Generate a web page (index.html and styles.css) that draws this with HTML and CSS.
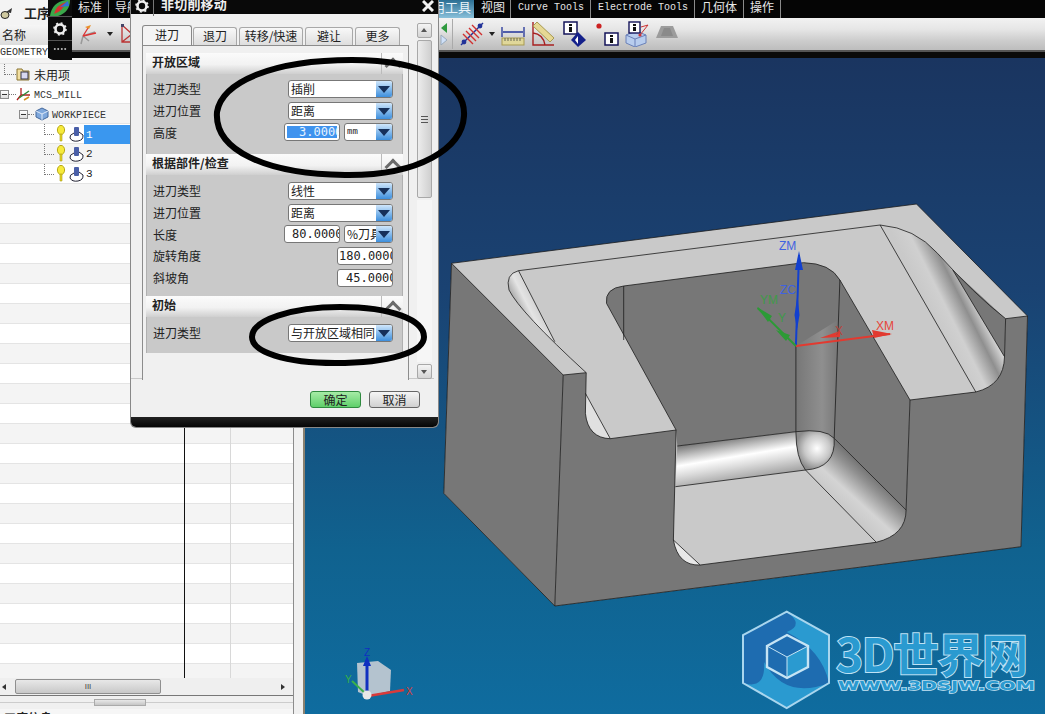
FILE: index.html
```html
<!DOCTYPE html>
<html lang="zh">
<head>
<meta charset="utf-8">
<title>非切削移动</title>
<link rel="stylesheet" href="styles.css">
</head>
<body>
<div class="app">
  <header class="top">
    <div class="left-head">
      <div class="nav-title">
        <svg class="nav-icon" viewBox="0 0 14 14" width="14" height="14"><ellipse cx="5" cy="9" rx="4" ry="3.5" fill="#cfc9a0" stroke="#222"/><path d="M6 6 L12 2 L11 7 Z" fill="#333"/></svg>
        <span>工序</span>
      </div>
      <div class="col-head">名称</div>
      <div class="geom">GEOMETRY</div>
    </div>
    <div class="ribbon">
      <nav class="tabs">
        <span class="tab first">标准</span>
        <span class="tab">导航</span>
        <span class="tab active">实用工具</span>
        <span class="tab">视图</span>
        <span class="tab mono">Curve Tools</span>
        <span class="tab mono">Electrode Tools</span>
        <span class="tab">几何体</span>
        <span class="tab">操作</span>
      </nav>
      <div class="tools">
        <div class="tool-left">
          <svg viewBox="0 0 24 24" width="24" height="24"><path d="M7 14 L5 22 M7 14 L13 19 M7 14 L19 10" stroke="#999" stroke-width="1.5" fill="none"/><path d="M7 14 L12 6 M7 14 L20 11" stroke="#d33" stroke-width="1.3" fill="none"/><path d="M9 5 L15 3 L13 7 Z" fill="#e8902a"/></svg>
          <span class="caret"></span>
          <svg viewBox="0 0 14 24" width="14" height="24"><path d="M2 3 L2 20 L12 20 M2 3 L12 12 L2 20" stroke="#b33" stroke-width="1.3" fill="none"/><rect x="1" y="2" width="3" height="3" fill="#446"/><rect x="10" y="10" width="3" height="3" fill="#b33"/></svg>
        </div>
        <div class="tool-right">
          <div class="nudge">
            <svg viewBox="0 0 8 24" width="8" height="24"><path d="M7 2 L1 7 L7 12 Z" fill="#2f9a3f"/><path d="M1 14 L7 19 L1 24 Z" fill="#cfe0f8" stroke="#9ab"/></svg>
          </div>
          <span class="tool-sep"></span>
          <svg viewBox="0 0 24 26" width="24" height="26"><path d="M1 24 L23 2" stroke="#223399" stroke-width="1.4"/><circle cx="20" cy="5" r="2.4" fill="#223399"/><circle cx="4" cy="21" r="2.4" fill="#223399"/><path d="M6 10 L16 20 M9 7 L19 17 M12 4 L22 14 M3 13 L13 23" stroke="#d03030" stroke-width="1.4"/></svg>
          <span class="caret"></span>
          <svg viewBox="0 0 26 26" width="26" height="26"><path d="M2 6 L2 16 M24 6 L24 16 M3 11 L23 11" stroke="#223399" stroke-width="1.3"/><rect x="2" y="17" width="22" height="7" fill="#e0d79a" stroke="#a89a50"/><path d="M5 17 v3 M8 17 v3 M11 17 v3 M14 17 v3 M17 17 v3 M20 17 v3" stroke="#665"/></svg>
          <svg viewBox="0 0 24 26" width="24" height="26"><path d="M2 1 L2 24 L23 24 M2 12 Q12 13 14 24" stroke="#a82020" stroke-width="1.4" fill="none"/><path d="M6 1 L2 5 L19 21 L23 17 Z" fill="#e6d894" stroke="#a89a50"/></svg>
          <svg class="far" viewBox="0 0 24 26" width="24" height="26"><rect x="1" y="1" width="13" height="12" fill="#fff" stroke="#14145a" stroke-width="1.5"/><rect x="6" y="3" width="3" height="2" fill="#111"/><rect x="6" y="6" width="3" height="5" fill="#111"/><path d="M15 11 L23 19 L15 26 L8 19 Z" fill="#14208a"/><path d="M15 15 L12 19 L15 23 Z" fill="#fff"/></svg>
          <svg class="far" viewBox="0 0 24 26" width="24" height="26"><circle cx="4" cy="5" r="2.6" fill="#cc2222"/><rect x="10" y="12" width="13" height="12" fill="#fff" stroke="#14145a" stroke-width="1.5"/><rect x="15" y="14" width="3" height="2" fill="#111"/><rect x="15" y="17" width="3" height="5" fill="#111"/></svg>
          <svg viewBox="0 0 26 26" width="26" height="26"><path d="M2 14 L12 10 L22 14 L22 22 L11 26 L2 22 Z" fill="#b8cdee" stroke="#6a80b8"/><path d="M2 14 L11 18 L22 14 M11 18 L11 26" stroke="#6a80b8" fill="none"/><rect x="5" y="1" width="11" height="11" fill="#fff" stroke="#14145a" stroke-width="1.4"/><rect x="9" y="3" width="3" height="2" fill="#111"/><rect x="9" y="6" width="3" height="4" fill="#111"/><path d="M16 14 L24 4 L17 6" stroke="#c33" fill="none"/><circle cx="16" cy="14" r="1.6" fill="#c33"/></svg>
          <svg viewBox="0 0 24 26" width="24" height="26"><path d="M6 5 L18 5 L23 17 L1 17 Z" fill="#9c9c9c"/><path d="M9 7 L15 7 L18 15 L6 15 Z" fill="#8a8a8a"/></svg>
        </div>
      </div>
      <div class="black-strip"></div>
    </div>
  </header>

  <main class="main">
    <section class="tree">
      <div class="list">
        <div class="row lv0">
          <span class="branch b-top"></span>
          <svg class="ico" viewBox="0 0 14 14" width="14" height="14"><path d="M1 2 H6 L7 4 H13 V13 H1 Z" fill="#f2dfa0" stroke="#8a7530"/><rect x="5" y="5" width="7" height="7" fill="#d8d8f0" stroke="#334"/></svg>
          <span class="cjk">未用项</span>
        </div>
        <div class="row lv0">
          <span class="exp"></span>
          <span class="branch b-plain"></span>
          <svg class="ico" viewBox="0 0 16 16" width="16" height="16"><path d="M5 2 V9 L14 9 M5 9 L1 14" stroke="#b02020" fill="none" stroke-width="1.3"/><path d="M3 12 L13 5" stroke="#2f8a3a" stroke-width="1.5"/><path d="M8 14 L13 11" stroke="#d09020" stroke-width="1.5"/></svg>
          <span class="mono-t">MCS_MILL</span>
        </div>
        <div class="row lv1">
          <span class="exp"></span>
          <span class="branch b-plain short"></span>
          <svg class="ico" viewBox="0 0 16 16" width="16" height="16"><path d="M2 5 L8 2 L14 5 L14 11 L8 14 L2 11 Z" fill="#7fa8dc" stroke="#44689c"/><path d="M2 5 L8 8 L14 5 M8 8 V14" stroke="#dfeaf8" fill="none"/></svg>
          <span class="mono-t">WORKPIECE</span>
        </div>
        <div class="row lv2 sel-row">
          <span class="branch b-op"></span>
          <svg class="bulb" viewBox="0 0 10 18" width="10" height="18"><ellipse cx="5" cy="5" rx="3.6" ry="4.6" fill="#f6ea3c" stroke="#b8a818"/><path d="M4 9 L4 16 L6 16 L6 9 Z" fill="#e8d820" stroke="#a89a18" stroke-width=".6"/></svg>
          <svg class="tool" viewBox="0 0 15 17" width="15" height="17"><path d="M5 7 Q0 9 1 12 Q3 16 9 15 Q14.5 14 14 9 L10 6" fill="#fff" stroke="#223"/><rect x="5" y="1" width="5" height="9" rx="1" fill="#4a5fa8"/></svg>
          <span class="op-label selected">1</span>
        </div>
        <div class="row lv2">
          <span class="branch b-op"></span>
          <svg class="bulb" viewBox="0 0 10 18" width="10" height="18"><ellipse cx="5" cy="5" rx="3.6" ry="4.6" fill="#f6ea3c" stroke="#b8a818"/><path d="M4 9 L4 16 L6 16 L6 9 Z" fill="#e8d820" stroke="#a89a18" stroke-width=".6"/></svg>
          <svg class="tool" viewBox="0 0 15 17" width="15" height="17"><path d="M5 7 Q0 9 1 12 Q3 16 9 15 Q14.5 14 14 9 L10 6" fill="#fff" stroke="#223"/><rect x="5" y="1" width="5" height="9" rx="1" fill="#4a5fa8"/></svg>
          <span class="op-label">2</span>
        </div>
        <div class="row lv2">
          <span class="branch b-op"></span>
          <svg class="bulb" viewBox="0 0 10 18" width="10" height="18"><ellipse cx="5" cy="5" rx="3.6" ry="4.6" fill="#f6ea3c" stroke="#b8a818"/><path d="M4 9 L4 16 L6 16 L6 9 Z" fill="#e8d820" stroke="#a89a18" stroke-width=".6"/></svg>
          <svg class="tool" viewBox="0 0 15 17" width="15" height="17"><path d="M5 7 Q0 9 1 12 Q3 16 9 15 Q14.5 14 14 9 L10 6" fill="#fff" stroke="#223"/><rect x="5" y="1" width="5" height="9" rx="1" fill="#4a5fa8"/></svg>
          <span class="op-label">3</span>
        </div>
      </div>
      <div class="hscroll">
        <span class="arr-l"></span>
        <span class="hthumb">III</span>
        <span class="arr-r"></span>
      </div>
      <div class="splitter"><span class="handle"></span></div>
      <div class="detail-head">工序信息</div>
    </section>
    <div class="gutter"></div>

    <section class="view">
      <svg class="scene" viewBox="305 58 740 656" width="740" height="656">
        <defs>
          <linearGradient id="bg" x1="0" y1="0" x2="0" y2="1">
            <stop offset="0" stop-color="#1a3560"/><stop offset=".35" stop-color="#1a4272"/><stop offset=".75" stop-color="#10628f"/><stop offset="1" stop-color="#0f6c9f"/>
          </linearGradient>
          <linearGradient id="band" gradientUnits="userSpaceOnUse" x1="730" y1="438" x2="737" y2="480">
            <stop offset="0" stop-color="#7a7a7a"/><stop offset=".22" stop-color="#bdbdbd"/><stop offset=".45" stop-color="#fff"/><stop offset=".68" stop-color="#dcdcdc"/><stop offset="1" stop-color="#a6a6a6"/>
          </linearGradient>
          <linearGradient id="rfloor" gradientUnits="userSpaceOnUse" x1="841" y1="506" x2="870" y2="474">
            <stop offset="0" stop-color="#c9c9c9"/><stop offset=".35" stop-color="#d4d4d4"/><stop offset=".8" stop-color="#909090"/><stop offset="1" stop-color="#777"/>
          </linearGradient>
          <linearGradient id="vwall" gradientUnits="userSpaceOnUse" x1="796" y1="0" x2="838" y2="0">
            <stop offset="0" stop-color="#777"/><stop offset=".62" stop-color="#8f8f8f"/><stop offset="1" stop-color="#777"/>
          </linearGradient>
          <linearGradient id="rtop" gradientUnits="userSpaceOnUse" x1="935" y1="320" x2="985" y2="295">
            <stop offset="0" stop-color="#c9c9c9"/><stop offset=".28" stop-color="#d0d0d0"/><stop offset=".58" stop-color="#8f8f8f"/><stop offset=".85" stop-color="#e4e4e4"/><stop offset="1" stop-color="#c4c4c4"/>
          </linearGradient>
          <radialGradient id="ball" cx=".55" cy=".45" r=".55">
            <stop offset="0" stop-color="#fff"/><stop offset=".6" stop-color="#c8c8c8"/><stop offset="1" stop-color="#8c8c8c"/>
          </radialGradient>
          <linearGradient id="lfil" gradientUnits="userSpaceOnUse" x1="515" y1="300" x2="535" y2="290">
            <stop offset="0" stop-color="#b0b0b0"/><stop offset=".4" stop-color="#e4e4e4"/><stop offset="1" stop-color="#c9c9c9"/>
          </linearGradient>
        </defs>
        <rect x="305" y="58" width="740" height="656" fill="url(#bg)"/>

        <path class="lit" d="M451.5 263.3 L916.5 204 L1027.5 316 L1021 546.7 L554.8 606 L443.8 493.3 Z"/>
        <path class="dark" d="M451.5 263.3 L563.2 375 L554.8 606 L443.8 493.3 Z"/>

        <path class="dark" d="M623.7 286 L803.6 262.7 Q830.4 263.3 839.9 280 L910 400 L906.1 510 L834.2 438.3 L795.9 431.7 L677.3 446 L676.1 430 L606.5 303.3 Q604.6 288.3 623.7 286 Z"/>
        <path fill="url(#vwall)" d="M795.9 346 L795.9 431.7 L834.2 438.3 L838 320 Z"/>
        <path fill="url(#band)" d="M677.3 446 L795.9 431.7 Q795.9 458 805.5 470 L675.4 486.7 Z"/>
        <path fill="url(#rfloor)" d="M834.2 438.3 L906.1 510 Q906 535 876.3 542.3 L805.5 470 Q830 470 834.2 438.3 Z"/>
        <path fill="url(#ball)" d="M795.9 431.7 Q825 428 834.2 438.3 Q836 468 805.5 470 Q795.9 458 795.9 431.7 Z"/>
        <path fill="#e8e8e8" d="M673.4 540 L700.2 565 Q678 566 673.4 545 Z"/>

        <path fill="url(#rtop)" d="M880.1 225 Q915 228 937.5 253.3 Q990 310 1004.5 356.7 Q1005 385 975.8 392 Z"/>
        <path class="dark" d="M952.8 270 L1005.6 318.7 L1004.5 356.7 Z"/>
        <path fill="url(#lfil)" d="M518.5 270.7 Q505 274 509 290 Q520 312 554.8 341.7 Z"/>
        <path fill="#e0e0e0" d="M585.4 393.3 L610.3 438.7 Q588 438 585.4 413 Z"/>

        <path class="dark" d="M563.2 375 L586.2 372.7 L585.4 413.3 Q588 438 610.3 438.7 L676.1 430 L673.4 540 Q678 566 700.2 565 L876.3 542.3 Q906 535 906.1 510 L910 400 L975.8 392 Q1004 385 1004.5 356.7 L1005.6 318.7 L1027.5 316 L1021 546.7 L554.8 606 Z"/>

        <g class="edge">
          <path d="M451.5 263.3 L916.5 204 L1027.5 316 L1021 546.7 L554.8 606 L443.8 493.3 Z"/>
          <path d="M451.5 263.3 L563.2 375 L554.8 606"/>
          <path d="M563.2 375 L586.2 372.7 L585.4 413.3 Q588 438 610.3 438.7 L676.1 430 L673.4 540 Q678 566 700.2 565 L876.3 542.3 Q906 535 906.1 510 L910 400 L975.8 392 Q1004 385 1004.5 356.7 L1005.6 318.7 L1027.5 316"/>
          <path d="M518.5 270.7 L880.1 225 Q915 228 937.5 253.3 Q975 295 1005.6 318.7"/>
          <path d="M518.5 270.7 Q505 274 509 290 Q520 312 586.2 372.7"/>
          <path d="M518.5 270.7 L554.8 341.7 M585.4 393.3 L610.3 438.7 M880.1 225 L975.8 392 M952.8 270 L1004.5 356.7"/>
          <path d="M676.1 430 L606.5 303.3 Q604.6 288.3 623.7 286 L803.6 262.7 Q830.4 263.3 839.9 280 L910 400"/>
          <path d="M623.7 286 L623.7 340 M839.9 280 L834.2 438.3 M795.9 346 L795.9 431.7"/>
          <path d="M677.3 446 L795.9 431.7 Q825 428 834.2 438.3 L906.1 510 M675.4 486.7 L805.5 470 L876.3 542.3 M795.9 431.7 Q795.9 458 805.5 470 Q836 468 834.2 438.3 M673.4 540 L700.2 565"/>
        </g>

        <g class="axes">
          <path class="ax-b" d="M795.9 346 L799 255"/><path fill="#1240d0" d="M799 251 L795 270 L803 270 Z M797.5 295 L794.5 315 L797 330 L799.5 315 Z"/>
          <path class="ax-r" d="M795.9 346 L890 334"/><path fill="#e23a30" d="M892 334 L872 330 L874 338 Z M840 331 L820 338 L840 337 Z"/>
          <path class="ax-g" d="M795.9 346 L757.6 308"/><path fill="#2c9a36" d="M757 307 L768 322 L772 316 Z M776 330 L786 341 L790 335 Z"/>
        </g>
        <text class="lb lb-b" x="779" y="250">ZM</text>
        <text class="lb lb-b" x="780" y="294">ZC</text>
        <text class="lb lb-r" x="876" y="330">XM</text>
        <text class="lb lb-dr" x="835" y="335">X</text>
        <text class="lb lb-dg" x="760" y="304">YM</text>
        <text class="lb lb-dg" x="778" y="322">Y</text>

        <g>
          <path fill="#b4c3cf" d="M357 663 L378 661 L391 670 L390 691 L368 696 L358 692 Z"/>
          <path stroke="#d83a3a" stroke-width="2.5" d="M368 696 L404 690"/>
          <path stroke="#3bb04a" stroke-width="2" d="M366 694 L352 681"/>
          <path stroke="#1030c0" stroke-width="3" d="M367 694 L367 660"/>
          <path fill="#1030c0" d="M367 656 L363 666 L371 666 Z"/>
          <circle cx="367" cy="695" r="4.5" fill="#e8e8e8"/>
        </g>
        <text class="mini mini-b" x="364" y="656">Z</text>
        <text class="mini mini-g" x="345" y="683">Y</text>
        <text class="mini mini-r" x="406" y="695">X</text>

        <g class="logo">
          <path fill="#1e6cb0" d="M786.7 611.7 L829 635 V683 L786.7 708 L743 683 V635 Z"/>
          <path fill="#2a9ad0" d="M786.7 611.7 L829 635 V683 Q822 650 786.7 632 Q805 625 786.7 611.7 Z"/>
          <path fill="#2a9ad0" d="M786.7 708 L743 683 Q766 690 764 662 Q785 700 829 683 Z"/>
          <path fill="none" stroke="#a9d6ee" stroke-width="2" d="M786.7 611.7 L829 635 V683 L786.7 708 L743 683 V635 Z"/>
          <path fill="#1e6cb0" d="M767 646 L787 635 L808 646 L787 657 Z"/>
          <path fill="#1e6cb0" d="M767 646 L787 657 V678 L767 667 Z"/>
          <path fill="#2a9ad0" d="M808 646 L787 657 V678 L808 667 Z"/>
          <path fill="none" stroke="#c6e4f4" stroke-width="2.4" d="M767 646 L787 635 L808 646 V667 L787 678 L767 667 Z"/>
          <path fill="none" stroke="#c6e4f4" stroke-width="1" d="M767 646 L787 657 L808 646 M787 657 V678"/>
        </g>
        <text class="wm-big" x="836" y="672">3D世界网</text>
        <text class="wm-small" x="838" y="690" textLength="197" lengthAdjust="spacingAndGlyphs">WWW.3DSJW.COM</text>
      </svg>
    </section>
  </main>

  <aside class="palette">
    <div class="pal-cell pal-logo">
      <svg viewBox="0 0 24 16" width="24" height="16"><path d="M2 16 Q4 2 18 0 L22 0 Q22 12 10 16 Z" fill="#3aa84a"/><path d="M6 14 Q8 5 18 2 Q15 11 6 14 Z" fill="#d83030"/><path d="M12 7 Q16 4 20 1 L21 6 Z" fill="#3070d8"/></svg>
    </div>
    <div class="pal-cell">
      <svg viewBox="0 0 14 14" width="14" height="14"><circle cx="7" cy="7" r="4.5" fill="none" stroke="#eee" stroke-width="2.6"/><circle cx="7" cy="7" r="6" fill="none" stroke="#eee" stroke-width="1.6" stroke-dasharray="2 2.7"/></svg>
    </div>
    <div class="pal-cell pal-dots"></div>
  </aside>

  <aside class="dialog">
    <div class="dlg-title">
      <svg viewBox="0 0 14 14" width="14" height="14"><circle cx="7" cy="7" r="4.5" fill="none" stroke="#eee" stroke-width="2.6"/><circle cx="7" cy="7" r="6" fill="none" stroke="#eee" stroke-width="1.6" stroke-dasharray="2 2.7"/></svg>
      <span class="dlg-sep"></span>
      <span class="dlg-name">非切削移动</span>
      <svg class="dlg-close" viewBox="0 0 12 12" width="12" height="12"><path d="M1 1 L11 11 M11 1 L1 11" stroke="#f2f2f2" stroke-width="3"/></svg>
    </div>
    <div class="dlg-body">
      <div class="dlg-content">
        <div class="dlg-tabs">
          <span class="dtab on t1">进刀</span>
          <span class="dtab t2">退刀</span>
          <span class="dtab t3">转移/快速</span>
          <span class="dtab t4">避让</span>
          <span class="dtab t5">更多</span>
        </div>
        <div class="dlg-panel">
          <div class="sec-head"><span>开放区域</span><i class="chev"></i></div>
          <div class="sec-body s1">
            <div class="frow"><label>进刀类型</label><span class="combo"><b>插削</b><i></i></span></div>
            <div class="frow"><label>进刀位置</label><span class="combo"><b>距离</b><i></i></span></div>
            <div class="frow"><label>高度</label><span class="num sel">3.00000</span><span class="combo unit"><b class="sm">mm</b><i></i></span></div>
          </div>
          <div class="sec-head"><span>根据部件/检查</span><i class="chev"></i></div>
          <div class="sec-body s2">
            <div class="frow"><label>进刀类型</label><span class="combo"><b>线性</b><i></i></span></div>
            <div class="frow"><label>进刀位置</label><span class="combo"><b>距离</b><i></i></span></div>
            <div class="frow"><label>长度</label><span class="num p80">80.00000</span><span class="combo unit"><b>%刀具</b><i></i></span></div>
            <div class="frow"><label>旋转角度</label><span class="num wide">180.00000</span></div>
            <div class="frow"><label>斜坡角</label><span class="num wide p45">45.00000</span></div>
          </div>
          <div class="sec-head"><span>初始</span><i class="chev"></i></div>
          <div class="sec-body s3">
            <div class="frow"><label>进刀类型</label><span class="combo"><b>与开放区域相同</b><i></i></span></div>
          </div>
        </div>
      </div>
      <div class="vscroll">
        <span class="vbtn up"></span>
        <span class="vthumb"><em></em></span>
        <span class="vfill"></span>
        <span class="vbtn down"></span>
      </div>
    </div>
    <div class="dlg-foot">
      <span class="btn ok">确定</span>
      <span class="btn">取消</span>
    </div>
    <div class="dlg-bottom"></div>
  </aside>

  <svg class="marks" viewBox="0 0 1045 714" width="1045" height="714">
    <path d="M217 112 C222 82 272 60 352 60 C425 60 466 84 464 116 C462 148 420 176 345 175 C265 174 214 150 217 112 Z"/>
    <path d="M252 337 C252 320 292 307 340 307 C392 307 424 320 424 337 C424 352 390 363 335 363 C285 363 252 352 252 337 Z"/>
  </svg>
</div>
</body>
</html>
```

FILE: styles.css
```css
* { box-sizing: border-box; }
html, body { margin: 0; padding: 0; height: 100%; overflow: hidden; background: #f0f0f0; }
body { font-family: "Noto Sans CJK SC", "Liberation Sans", sans-serif; font-size: 12px; color: #222; }

.app { position: relative; width: 1045px; height: 714px; overflow: hidden; display: flex; flex-direction: column; }

/* top strip */
.top { display: flex; height: 58px; flex: none; }
.left-head { width: 48px; flex: none; overflow: hidden; background: #fff; white-space: nowrap; }
.nav-title { height: 25px; display: flex; align-items: center; gap: 10px; background: #f4f4f4; font-weight: 700; font-size: 13px; line-height: 1; }
.nav-icon { margin-left: 0; flex: none; }
.col-head { height: 20px; line-height: 20px; padding-left: 2px; font-size: 12px; background: linear-gradient(#f6f6f6, #dcdcdc); }
.geom { height: 13px; font: 10px/16px "Liberation Mono", monospace; color: #333; }

.ribbon { flex: 1; display: flex; flex-direction: column; min-width: 0; background: #000; }
.tabs { height: 18px; display: flex; background: #050505; color: #e8e8e8; font-size: 12px; line-height: 13px; padding-left: 24px; white-space: nowrap; }
.tab { padding: 0 6px; border-right: 1px solid #8a8a8a; height: 18px; font-size: 12px; }
.tab.first { width: 37px; }
.tab.active { margin-left: 255px; width: 60px; padding: 0 0 0 5px; font-size: 13px; background: linear-gradient(#2b6f94, #89c0da); border-right: none; color: #eaf4fa; }
.tab.active + .tab { padding-left: 6px; margin-left: 0; width: 37px; border-left: 1px solid #000; }
.tab.mono { font: 10px/15px "Liberation Mono", monospace; padding: 0 6px 0 7px; letter-spacing: 0; color: #e4e4e4; }
.tab:nth-child(2) { width: 50px; }

.tools { height: 32px; display: flex; background: linear-gradient(#f2f2f2, #e6e6e6 35%, #cdcdcd 70%, #bdbdbd); padding-left: 28px; align-items: center; }
.tool-left { display: flex; align-items: center; gap: 7px; width: 60px; flex: none; overflow: hidden; }
.tool-right { display: flex; align-items: center; margin-left: 304px; gap: 5px; }
.nudge { width: 8px; margin-right: -1px; }
.tool-sep { width: 1px; height: 30px; background: #aaa; margin-right: 2px; }
.far { margin-left: 3px; }
.caret { width: 0; height: 0; border-left: 3.5px solid transparent; border-right: 3.5px solid transparent; border-top: 4px solid #222; }
.black-strip { height: 8px; background: #0a0a0a; border-top: 2px solid #555; }

/* main */
.main { flex: 1; display: flex; min-height: 0; }
.tree { width: 294px; flex: none; display: flex; flex-direction: column; border-right: 1px solid #8c8c8c; background: #f6f6f6; }
.list {
  height: 620px; flex: none; padding-top: 6px;
  background-color: #fff;
  background-image:
    linear-gradient(#111, #111),
    linear-gradient(#d8d8d8, #d8d8d8),
    repeating-linear-gradient(#f4f4f4 0 19px, #e4e4e4 19px 20px, #fff 20px 39px, #e4e4e4 39px 40px);
  background-size: 1px 100%, 1px 100%, auto;
  background-position: 184px 0, 230px 0, 0 6px;
  background-repeat: no-repeat, no-repeat, repeat;
}
.row { height: 20px; display: flex; align-items: center; white-space: nowrap; font-size: 12px; }
.lv0 { padding-left: 0; }
.lv1 { padding-left: 19px; }
.lv2 { padding-left: 44px; }
.exp { width: 9px; height: 9px; border: 1px solid #8b8b8b; background: linear-gradient(#fff, #ddd); position: relative; flex: none; }
.exp::after { content: ""; display: block; width: 5px; height: 1px; background: #333; margin: 3px 1px; }
.branch { align-self: flex-start; flex: none; height: 11px; border-bottom: 1px dotted #777; }
.b-top { width: 12px; margin-left: 4px; border-left: 1px dotted #777; }
.b-plain { width: 7px; align-self: center; height: 1px; }
.b-plain.short { width: 6px; }
.b-op { width: 10px; border-left: 1px dotted #777; }
.ico { flex: none; margin-right: 2px; }
.cjk { font-size: 12px; margin-left: 2px; }
.mono-t { font: 10px/24px "Liberation Mono", monospace; height: 20px; color: #333; }
.bulb { flex: none; margin-left: 2px; }
.tool { flex: none; margin-left: 3px; }
.op-label { font: 11px/20px "Liberation Mono", monospace; padding-left: 2px; }
.op-label.selected { width: 99px; background: #3a97ef; color: #fff; height: 19px; }

.hscroll { height: 18px; flex: none; display: flex; align-items: center; background: #efefef; border-bottom: 1px solid #777; padding: 0 8px 0 2px; }
.arr-l { width: 0; height: 0; border: 3.5px solid transparent; border-right: 4px solid #333; border-left: 0; margin-right: 9px; }
.arr-r { width: 0; height: 0; border: 3.5px solid transparent; border-left: 4px solid #333; border-right: 0; margin-left: auto; }
.hthumb { width: 146px; height: 15px; border: 1px solid #8f8f8f; border-radius: 2px; background: linear-gradient(#e8e8e8, #c8c8c8); font: 8px/13px "Liberation Sans", sans-serif; text-align: center; color: #444; }
.splitter { height: 13px; flex: none; display: flex; align-items: center; justify-content: center; background: linear-gradient(#ccc, #ccc) center / 100% 1px no-repeat #f0f0f0; padding-right: 54px; }
.handle { width: 52px; height: 7px; background: linear-gradient(#e8e8e8, #c6c6c6); border: 1px solid #aaa; }
.detail-head { flex: none; height: 12px; font-weight: 700; font-size: 12px; padding-left: 4px; line-height: 18px; background: #f6f6f6; }
.gutter { width: 11px; flex: none; background: #f0f0f0; border-right: 2px solid #8a8170; }

.view { flex: 1; min-width: 0; overflow: hidden; }
.scene { display: block; }
.lit { fill: #c9c9c9; }
.dark { fill: #777; }
.edge path { fill: none; stroke: #1c1c1c; stroke-width: .8; }
.ax-b { stroke: #1240d0; stroke-width: 2; }
.ax-r { stroke: #e23a30; stroke-width: 2; }
.ax-g { stroke: #2c9a36; stroke-width: 2; }
.lb { font: 12px "Liberation Sans", sans-serif; }
.lb-b { fill: #3f62e0; }
.lb-r { fill: #e6463a; }
.lb-dr { fill: #b8443c; }
.lb-dg { fill: #3f9a48; }
.mini { font: 10px "Liberation Sans", sans-serif; }
.mini-b { fill: #1030c0; }
.mini-g { fill: #35b048; }
.mini-r { fill: #d84040; }
.wm-big { font: 700 46px "Noto Sans CJK SC", "DejaVu Sans", sans-serif; fill: #2a9ad0; stroke: #bfe2f4; stroke-width: 2px; letter-spacing: -1.5px; paint-order: stroke; }
.wm-small { font: 700 13px "DejaVu Sans", sans-serif; fill: #2a9ad0; stroke: #c6e4f4; stroke-width: 1.4px; paint-order: stroke; }

/* floating palette */
.palette { position: absolute; left: 48px; top: 0; width: 24px; height: 60px; background: #0c0c0c; border-radius: 0 0 0 5px; display: flex; flex-direction: column; }
.pal-cell { height: 20px; display: flex; align-items: center; justify-content: center; border-bottom: 1px solid #555; }
.pal-logo { height: 17px; overflow: hidden; align-items: flex-start; }
.pal-cell:nth-child(2) { height: 24px; }
.pal-dots { flex: 1; border: none; margin: 6px 5px 9px; background-image: radial-gradient(#aaa 0.7px, transparent 0.8px); background-size: 3.5px 3.5px; }

/* dialog */
.dialog { position: absolute; left: 131px; top: -8px; width: 307px; height: 435px; display: flex; flex-direction: column; background: #f0f0f0; border-radius: 0 0 5px 5px; overflow: hidden; box-shadow: 0 0 0 1px #888; }
.dlg-title { height: 22px; flex: none; background: #090909; color: #eee; display: flex; align-items: center; padding: 6px 4px 0 4px; }
.dlg-sep { width: 1px; height: 20px; background: #777; margin: 0 7px 0 4px; }
.dlg-name { font-weight: 700; font-size: 13px; letter-spacing: .2px; margin-top: -6px; }
.dlg-close { margin-left: auto; margin-right: 0; }
.dlg-body { flex: 1; display: flex; min-height: 0; padding: 8px 5px 0 11px; border-bottom: 1px solid #c8c8c8; margin: 0 4px 0 0; }
.dlg-content { width: 267px; flex: none; padding-top: 4px; }
.dlg-tabs { height: 19px; display: flex; align-items: flex-end; }
.dtab { height: 18px; border: 1px solid #a8a8a8; border-bottom: none; border-radius: 3px 3px 0 0; background: linear-gradient(#f8f8f8, #dedede); text-align: center; line-height: 15px; margin-right: 2px; white-space: nowrap; }
.dtab.on { height: 20px; background: #f4f4f4; border-color: #888; position: relative; line-height: 17px; }
.t1 { width: 50px; margin-right: 1px; }
.t2 { width: 44px; }
.t3 { width: 64px; }
.t4 { width: 48px; }
.t5 { width: 45px; }
.dlg-panel { height: 335px; border: 1px solid #8c8c8c; border-bottom: none; padding: 7px 5px 0 3px; background: #f0f0f0; }
.sec-head { height: 21px; display: flex; align-items: center; justify-content: space-between; padding-left: 6px; background: linear-gradient(#fbfbfb, #f2f2f2 55%, #cfcfcf); font-weight: 700; font-size: 12px; }
.sec-head span { margin-top: -5px; }
.chev { width: 22px; height: 21px; border-left: 1px solid #bbb; display: flex; align-items: center; justify-content: center; }
.chev::after { content: ""; width: 9px; height: 9px; margin-top: 4px; border-left: 3px solid #6a6a6a; border-top: 3px solid #6a6a6a; transform: rotate(45deg); }
.sec-body { background: #c9c9c9; border-left: 1px solid #b0b0b0; border-right: 1px solid #b0b0b0; padding-left: 6px; padding-right: 9px; }
.s1 { height: 80px; padding-top: 4px; }
.s2 { height: 121px; padding-top: 5px; }
.s3 { height: 36px; padding-top: 5px; }
.frow { height: 21.7px; display: flex; align-items: center; white-space: nowrap; }
.frow label { margin-right: auto; font-size: 12px; }
.combo { width: 105px; height: 18px; display: flex; background: #fff; border: 1px solid #777; border-radius: 3px; overflow: hidden; }
.combo b { flex: 1; min-width: 0; overflow: hidden; font-weight: 400; font-size: 12px; line-height: 15px; padding-left: 2px; }
.combo b.sm { font: 9px/16px "Liberation Mono", monospace; }
.combo i { width: 16px; flex: none; background: linear-gradient(#cfe6fb, #3d8fdd); position: relative; }
.combo i::after { content: ""; position: absolute; left: 2px; top: 5px; border-left: 6px solid transparent; border-right: 6px solid transparent; border-top: 7px solid #16305a; }
.combo.unit { width: 49px; margin-left: 4px; }
.num { width: 56px; height: 18px; background: #fff; border: 1px solid #777; border-radius: 3px; overflow: hidden; font: 12px/16px "DejaVu Sans Mono", monospace; padding-left: 3px; white-space: nowrap; }
.num.sel { background: linear-gradient(#3f93ee, #3f93ee) 2px 2px / 50px 12px no-repeat #fff; color: #e8f3ff; padding-left: 14px; }
.num.p80 { padding-left: 7px; }
.num.wide { width: 56px; padding-left: 1px; }
.num.wide.p45 { padding-left: 8px; }

.vscroll { width: 15px; flex: none; margin-left: 8px; display: flex; flex-direction: column; gap: 2px; margin-top: 1px; height: 356px; }
.vbtn { height: 15px; flex: none; background: linear-gradient(#f4f4f4, #d4d4d4); border: 1px solid #a8a8a8; position: relative; border-radius: 2px; }
.vbtn::after { content: ""; position: absolute; left: 3px; border-left: 3.5px solid transparent; border-right: 3.5px solid transparent; }
.up::after { top: 4px; border-bottom: 4px solid #555; }
.down::after { top: 5px; border-top: 4px solid #555; }
.vthumb { height: 158px; flex: none; background: linear-gradient(90deg, #ececec, #cfcfcf); border: 1px solid #a8a8a8; border-radius: 2px; display: flex; align-items: center; justify-content: center; }
.vthumb em { width: 7px; height: 7px; border-top: 1px solid #555; border-bottom: 1px solid #555; background: linear-gradient(#555, #555) center / 100% 1px no-repeat; }
.vfill { flex: 1; background: #f6f6f6; }

.dlg-foot { height: 38px; flex: none; display: flex; justify-content: flex-end; align-items: center; gap: 8px; padding: 2px 18px 0 0; }
.btn { width: 51px; height: 17px; border: 1px solid #666; border-radius: 3px; background: linear-gradient(#f6f6f6, #d0d0d0); text-align: center; line-height: 15px; font-size: 12px; }
.btn.ok { background: linear-gradient(#a6eca6, #5fcf6a); border-color: #2f8a3f; }
.dlg-bottom { height: 10px; flex: none; background: linear-gradient(#222, #050505); }

.marks { position: absolute; left: 0; top: 0; pointer-events: none; }
.marks path { fill: none; stroke: #000; stroke-width: 6; }
```
